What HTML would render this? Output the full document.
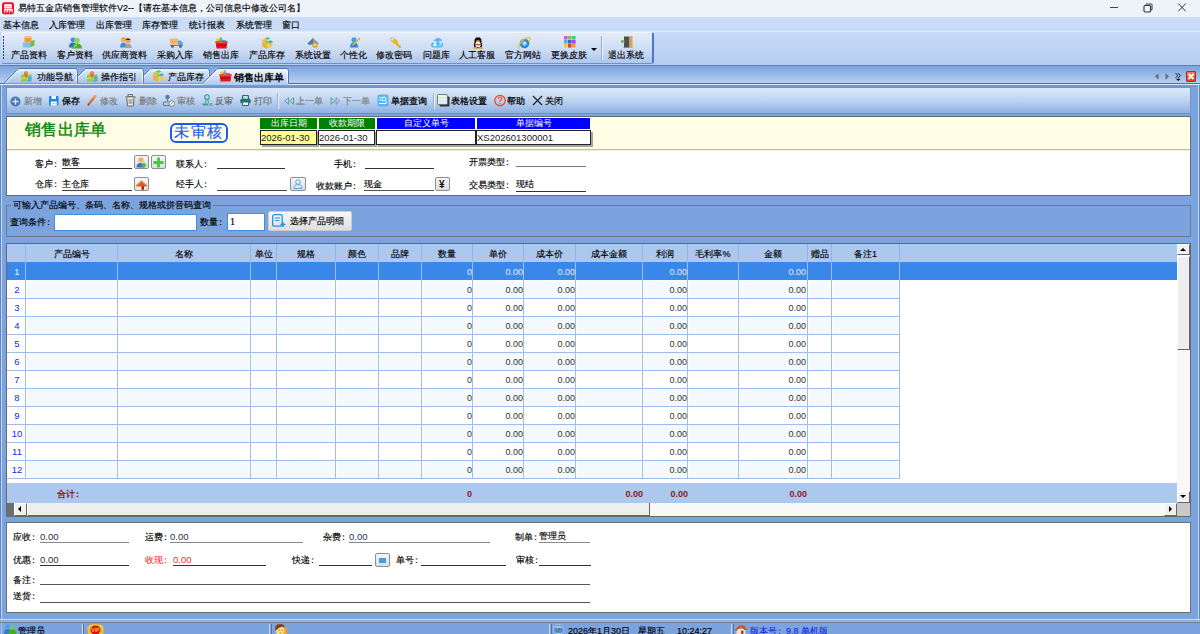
<!DOCTYPE html><html><head><meta charset="utf-8"><style>
*{box-sizing:border-box;margin:0;padding:0}
html,body{width:1200px;height:634px;overflow:hidden;background:#7ba3de;font-family:"Liberation Sans",sans-serif;font-size:9px;color:#000;position:relative}
.a{position:absolute;white-space:nowrap;line-height:1}
.t{font-size:9px;line-height:11px;-webkit-text-stroke:0.15px currentColor}
.g{color:#8c8c8c}
.ul{position:absolute;height:1px;background:#333}
.btn{position:absolute;border:1px solid #8e8e8e;border-radius:2px;background:linear-gradient(#f6f6f6,#dedede)}
</style></head><body>
<div class="a" style="left:0px;top:0px;width:1200px;height:17px;background:#eef2f9"></div>
<svg class="a" style="left:1px;top:1px" width="14" height="14"><rect x="1" y="1.2" width="12" height="12" rx="2" fill="#f0102a"/><rect x="3.2" y="3.2" width="7.6" height="4.3" fill="#fff"/><path d="M4 5.3h6" stroke="#f6a0a8" stroke-width="0.9"/><path d="M3 8.6h8.2v2.8" fill="none" stroke="#fff" stroke-width="1.2"/><path d="M4.5 8.8l-1.3 2.8M7 8.8l-1.3 2.8M9.5 8.8l-1.3 2.8" stroke="#fff" stroke-width="1.1"/></svg>
<div class="a t" style="left:18px;top:3px;">易特五金店销售管理软件V2--【请在基本信息，公司信息中修改公司名】</div>
<div class="a" style="left:1110px;top:7px;width:8px;height:1px;background:#444"></div>
<svg class="a" style="left:1143px;top:3px" width="10" height="10"><rect x="1" y="2.5" width="6.5" height="6.5" rx="1" fill="none" stroke="#333" stroke-width="1.1"/><path d="M3 2.5V1.5Q3 1 3.5 1H8.5Q9 1 9 1.5V6.5Q9 7 8.5 7H7.5" fill="none" stroke="#333" stroke-width="1"/></svg>
<svg class="a" style="left:1177px;top:2px" width="10" height="11"><path d="M1.2 1.5L8.8 9.3M8.8 1.5L1.2 9.3" stroke="#333" stroke-width="1"/></svg>
<div class="a" style="left:0px;top:17px;width:1200px;height:15px;background:#c9dbf5"></div>
<div class="a t" style="left:3px;top:20px;">基本信息</div>
<div class="a t" style="left:49px;top:20px;">入库管理</div>
<div class="a t" style="left:96px;top:20px;">出库管理</div>
<div class="a t" style="left:142px;top:20px;">库存管理</div>
<div class="a t" style="left:189px;top:20px;">统计报表</div>
<div class="a t" style="left:236px;top:20px;">系统管理</div>
<div class="a t" style="left:282px;top:20px;">窗口</div>
<div class="a" style="left:0px;top:31px;width:1200px;height:1px;background:#dfe7f5"></div>
<div class="a" style="left:0px;top:32px;width:1200px;height:33px;background:linear-gradient(#c6daf5,#b5cdf1)"></div>
<div class="a" style="left:1px;top:32px;width:653px;height:32px;border-radius:3px;background:linear-gradient(#e3ecf9,#cddcf4 55%,#aec7ec);border-bottom:1px solid #6d8fc7;border-right:2px solid #4a78c8;border-top:1px solid #eef3fb"></div>
<div class="a" style="left:3px;top:36px;width:1px;height:2px;background:#26467a"></div>
<div class="a" style="left:3px;top:39px;width:1px;height:2px;background:#26467a"></div>
<div class="a" style="left:3px;top:42px;width:1px;height:2px;background:#26467a"></div>
<div class="a" style="left:3px;top:45px;width:1px;height:2px;background:#26467a"></div>
<div class="a" style="left:3px;top:48px;width:1px;height:2px;background:#26467a"></div>
<div class="a" style="left:3px;top:51px;width:1px;height:2px;background:#26467a"></div>
<div class="a" style="left:3px;top:54px;width:1px;height:2px;background:#26467a"></div>
<div class="a" style="left:3px;top:57px;width:1px;height:2px;background:#26467a"></div>
<div class="a t" style="left:11px;top:50px;">产品资料</div>
<div class="a t" style="left:57px;top:50px;">客户资料</div>
<div class="a t" style="left:102px;top:50px;">供应商资料</div>
<div class="a t" style="left:157px;top:50px;">采购入库</div>
<div class="a t" style="left:203px;top:50px;">销售出库</div>
<div class="a t" style="left:249px;top:50px;">产品库存</div>
<div class="a t" style="left:295px;top:50px;">系统设置</div>
<div class="a t" style="left:340px;top:50px;">个性化</div>
<div class="a t" style="left:376px;top:50px;">修改密码</div>
<div class="a t" style="left:423px;top:50px;">问题库</div>
<div class="a t" style="left:459px;top:50px;">人工客服</div>
<div class="a t" style="left:505px;top:50px;">官方网站</div>
<div class="a t" style="left:551px;top:50px;">更换皮肤</div>
<div class="a t" style="left:608px;top:50px;">退出系统</div>
<div class="a" style="left:591px;top:48px;width:0;height:0;border-left:3px solid transparent;border-right:3px solid transparent;border-top:3px solid #000"></div>
<div class="a" style="left:601px;top:36px;width:1px;height:24px;background:#8ea9d4;box-shadow:1px 0 #f2f6fc"></div>
<svg class="a" style="left:22px;top:36px" width="13" height="12"><path d="M1 6.5h8v5H1z" fill="#7cc0f0"/><path d="M1 6.5h8" stroke="#a8d8f8"/><path d="M8.5 5l4-1v5.5l-4 1.5z" fill="#6cc040"/><rect x="2.5" y="0.5" width="7" height="6" rx="1" fill="#f59a28"/><path d="M3 1.5h6" stroke="#fcc070" stroke-width="1"/></svg>
<svg class="a" style="left:69px;top:37px" width="13" height="12"><circle cx="4" cy="2.8" r="2.4" fill="#3c8ee0"/><path d="M0 10Q0 5.5 4 5.5Q6 5.5 6.5 7V10.5H0z" fill="#2a6ec8"/><circle cx="8" cy="3.5" r="2.8" fill="#8ad850"/><path d="M3 11.5Q3 6.5 8 6.5Q13 6.5 13 11.5z" fill="#50b020"/><path d="M5 10.5Q5 8 8 8" stroke="#a8ec70" fill="none"/></svg>
<svg class="a" style="left:120px;top:37px" width="12" height="11"><circle cx="3.5" cy="3" r="2.6" fill="#f4b060"/><path d="M1 2Q3.5-0.8 6 2z" fill="#d8a020"/><path d="M0 10.5Q0 5.8 3.5 5.8Q6 5.8 6.5 8V10.5z" fill="#3a90e0"/><circle cx="8" cy="3.5" r="2.6" fill="#f4a060"/><path d="M5.3 3Q8-0.5 10.7 3z" fill="#333"/><path d="M4.5 11Q4.5 6.5 8 6.5Q11.5 6.5 11.5 11z" fill="#9aa0a8"/><path d="M8 7v3" stroke="#e8c040" stroke-width="0.8"/></svg>
<svg class="a" style="left:170px;top:38px" width="13" height="10"><rect x="0" y="0.5" width="8" height="6.5" fill="#f4b878"/><path d="M0 3.5h8" stroke="#e09850" stroke-width="0.6"/><path d="M8 2.5h3l2 2.5v2h-5z" fill="#5aa8e8"/><rect x="0" y="7" width="13" height="1" fill="#808890"/><circle cx="2.5" cy="8.5" r="1.4" fill="#5a6068"/><circle cx="10.5" cy="8.5" r="1.4" fill="#5a6068"/></svg>
<svg class="a" style="left:215px;top:37px" width="13" height="12"><ellipse cx="3.5" cy="3" rx="2.5" ry="1.8" fill="#f8c820"/><path d="M6 2.5l4 0.5 2 1.2v1H6z" fill="#30a8e8"/><path d="M4 2.5h3v2H4z" fill="#60c040"/><path d="M0.5 4.2h12l-1 7.3h-10z" fill="#e01818"/><rect x="0.3" y="4.2" width="12.4" height="2" rx="1" fill="#f04848"/><path d="M1.8 8h9.4" stroke="#b80808" stroke-width="1.2"/><rect x="5.3" y="0" width="1.3" height="5" fill="#909090"/></svg>
<svg class="a" style="left:261px;top:37px" width="12" height="12"><path d="M1 4.5l5 2.5v5l-5-2.5z" fill="#f0b040"/><path d="M6 7l5.5-2.5v5l-5.5 2.5z" fill="#f8c858"/><path d="M3.5 1.5l3-1.5 3 1.5-3 1.5z" fill="#70c840"/><path d="M0.5 3.5l3-1.7 3 1.7-3 1.7z" fill="#f4b830"/><path d="M6.5 5l3-1.7 2.5 1.4-3 1.7z" fill="#30a0e8"/><path d="M3.5 5.2l3-1.7 3 1.7-3 1.7z" fill="#80d050"/></svg>
<svg class="a" style="left:307px;top:37px" width="13" height="11"><path d="M6 0.5l3 3.5-3 3.5-3-3.5z" fill="#f8d040"/><path d="M0.5 6.5L6 1l1 6-5 1z" fill="#3a70b8" opacity="0.9"/><path d="M6 1l6 5.5-4 1z" fill="#6a9ad0"/><circle cx="8" cy="8" r="2.8" fill="#e0a020"/><circle cx="8" cy="8" r="1.2" fill="#f8e8a0"/></svg>
<svg class="a" style="left:350px;top:37px" width="10" height="11"><circle cx="4" cy="2.8" r="2.6" fill="#40a0f0"/><path d="M0 10.5Q0 5.5 4 5.5Q8 5.5 8 10.5z" fill="#2a86e0"/><path d="M2.5 8.5L9 2" stroke="#f0b020" stroke-width="1.6"/><path d="M9 2l0.8-0.8" stroke="#e07050" stroke-width="1.6"/></svg>
<svg class="a" style="left:390px;top:37px" width="12" height="12"><circle cx="2.5" cy="2.5" r="2" fill="none" stroke="#b0b0b0" stroke-width="0.9"/><circle cx="5" cy="4.5" r="2.6" fill="#f0b828"/><path d="M6 6l4.5 5" stroke="#e8a820" stroke-width="2"/><path d="M8.5 8.5l2-1M9.5 10l1.5-1" stroke="#c0c0c0" stroke-width="0.9"/></svg>
<svg class="a" style="left:431px;top:37px" width="12" height="11"><path d="M2.5 10.5Q0 10.5 0 8Q0 5.5 2.5 5.5Q3 1 7 1Q11 1 11.2 5Q12 6 12 8Q12 10.5 9.5 10.5z" fill="#58b8f0"/><circle cx="4" cy="5.5" r="1.3" fill="#fff"/><path d="M2 9Q2 7 4 7Q6 7 6 9z" fill="#fff"/><text x="7" y="9" font-size="7" fill="#fff" font-family="Liberation Sans" font-weight="bold">?</text></svg>
<svg class="a" style="left:472px;top:37px" width="12" height="12"><ellipse cx="6" cy="4.5" rx="3.6" ry="4.3" fill="#111"/><ellipse cx="6" cy="8" rx="4.2" ry="3.2" fill="#111"/><ellipse cx="6" cy="7.5" rx="2.8" ry="2.8" fill="#fff"/><ellipse cx="6" cy="4.3" rx="2" ry="1" fill="#f0b020"/><path d="M2.5 6.3Q6 8 9.5 6.3L9 7.8Q6 9 3 7.8z" fill="#e02020"/><ellipse cx="3.3" cy="11" rx="2.3" ry="1" fill="#f0a020"/><ellipse cx="8.7" cy="11" rx="2.3" ry="1" fill="#f0a020"/></svg>
<svg class="a" style="left:518px;top:37px" width="13" height="12"><circle cx="6.5" cy="6.5" r="4.8" fill="#2a8ae0"/><circle cx="6.5" cy="6.5" r="2.2" fill="#a8d8f8"/><rect x="4" y="6" width="6" height="1.3" fill="#2a8ae0"/><path d="M4.3 6.5h4.5" stroke="#fff" stroke-width="0.8"/><path d="M1 11.5Q-0.5 9 4 4Q9.5-1 12 0.8Q12.8 2 11 4" stroke="#f0c020" stroke-width="1.2" fill="none"/></svg>
<svg class="a" style="left:564px;top:36px" width="12" height="12"><rect x="0" y="0" width="3.6" height="3.6" fill="#e050d0"/><rect x="4" y="0" width="3.6" height="3.6" fill="#70d030"/><rect x="8" y="0" width="3.6" height="3.6" fill="#40d080"/><rect x="0" y="4" width="3.6" height="3.6" fill="#40b8f0"/><rect x="4" y="4" width="3.6" height="3.6" fill="#4060e0"/><rect x="8" y="4" width="3.6" height="3.6" fill="#b040f0"/><rect x="0" y="8" width="3.6" height="3.6" fill="#f0d030"/><rect x="4" y="8" width="3.6" height="3.6" fill="#e84040"/><rect x="8" y="8" width="3.6" height="3.6" fill="#f0a030"/></svg>
<svg class="a" style="left:621px;top:36px" width="12" height="12"><rect x="3" y="0.5" width="5.5" height="11" fill="#505050"/><path d="M8.5 0.5l3-0.5v12l-3-0.5z" fill="#e0a050"/><rect x="2.5" y="11" width="6" height="1" fill="#888"/><path d="M0 5.5h3.5" stroke="#60c030" stroke-width="2"/><path d="M0 5.5l2-2v4z" fill="#60c030"/></svg>
<div class="a" style="left:0px;top:65px;width:1200px;height:1px;background:#5a80bf"></div>
<div class="a" style="left:0px;top:66px;width:1200px;height:17px;background:linear-gradient(#7aa2dd,#b7d0f2)"></div>
<div class="a" style="left:0px;top:83px;width:1200px;height:1px;background:#476fb2"></div>
<div class="a" style="left:0px;top:84px;width:1200px;height:1px;background:#e2ecfa"></div>
<div class="a" style="left:0px;top:85px;width:1200px;height:2px;background:#7098d4"></div>
<svg class="a" style="left:135px;top:68px" width="75" height="17"><defs><linearGradient id="tga" x1="0" y1="0" x2="0" y2="1"><stop offset="0" stop-color="#f2f7fd"/><stop offset="1" stop-color="#b3cdf0"/></linearGradient><linearGradient id="tgi" x1="0" y1="0" x2="0" y2="1"><stop offset="0" stop-color="#e2ecfa"/><stop offset="1" stop-color="#a6c3eb"/></linearGradient></defs><path d="M0.5 15.5L14.5 1.5Q15.5 0.5 17 0.5H72Q74.5 0.5 74.5 3V15.5" fill="url(#tgi)" stroke="#4e74b4" stroke-width="1"/><path d="M2.5 15L15.5 2H72Q73.5 2 73.5 4V15" fill="none" stroke="#ffffff" stroke-opacity="0.8" stroke-width="1"/></svg>
<svg class="a" style="left:70px;top:68px" width="74" height="17"><defs><linearGradient id="tga" x1="0" y1="0" x2="0" y2="1"><stop offset="0" stop-color="#f2f7fd"/><stop offset="1" stop-color="#b3cdf0"/></linearGradient><linearGradient id="tgi" x1="0" y1="0" x2="0" y2="1"><stop offset="0" stop-color="#e2ecfa"/><stop offset="1" stop-color="#a6c3eb"/></linearGradient></defs><path d="M0.5 15.5L14.5 1.5Q15.5 0.5 17 0.5H71Q73.5 0.5 73.5 3V15.5" fill="url(#tgi)" stroke="#4e74b4" stroke-width="1"/><path d="M2.5 15L15.5 2H71Q72.5 2 72.5 4V15" fill="none" stroke="#ffffff" stroke-opacity="0.8" stroke-width="1"/></svg>
<svg class="a" style="left:3px;top:68px" width="75" height="17"><defs><linearGradient id="tga" x1="0" y1="0" x2="0" y2="1"><stop offset="0" stop-color="#f2f7fd"/><stop offset="1" stop-color="#b3cdf0"/></linearGradient><linearGradient id="tgi" x1="0" y1="0" x2="0" y2="1"><stop offset="0" stop-color="#e2ecfa"/><stop offset="1" stop-color="#a6c3eb"/></linearGradient></defs><path d="M0.5 15.5L14.5 1.5Q15.5 0.5 17 0.5H72Q74.5 0.5 74.5 3V15.5" fill="url(#tgi)" stroke="#4e74b4" stroke-width="1"/><path d="M2.5 15L15.5 2H72Q73.5 2 73.5 4V15" fill="none" stroke="#ffffff" stroke-opacity="0.8" stroke-width="1"/></svg>
<svg class="a" style="left:202px;top:68px" width="87" height="17"><defs><linearGradient id="tga" x1="0" y1="0" x2="0" y2="1"><stop offset="0" stop-color="#f2f7fd"/><stop offset="1" stop-color="#b3cdf0"/></linearGradient><linearGradient id="tgi" x1="0" y1="0" x2="0" y2="1"><stop offset="0" stop-color="#e2ecfa"/><stop offset="1" stop-color="#a6c3eb"/></linearGradient></defs><path d="M0.5 15.5L14.5 1.5Q15.5 0.5 17 0.5H84Q86.5 0.5 86.5 3V15.5" fill="url(#tga)" stroke="#4e74b4" stroke-width="1"/><path d="M2.5 15L15.5 2H84Q85.5 2 85.5 4V15" fill="none" stroke="#ffffff" stroke-opacity="0.8" stroke-width="1"/></svg>
<div class="a" style="left:203px;top:83px;width:85px;height:2px;background:#b3cdf0"></div>
<svg class="a" style="left:21px;top:71px" width="11" height="11"><path d="M0 4l3.5-1 3.5 1 3.5-1v7.5l-3.5 1-3.5-1-3.5 1z" fill="#8ad048"/><path d="M0 7l3.5-0.8 3.5 0.8v1.5l-3.5-0.8-3.5 0.8z" fill="#e8d048"/><path d="M7 6l3.5-0.8v2.5L7 8.5z" fill="#40a8e8"/><path d="M7 9l3.5-0.8v1.5L7 10.5z" fill="#40a8e8"/><circle cx="5" cy="2.3" r="2" fill="#f06020"/><path d="M3.3 3.2L5 7.5 6.7 3.2z" fill="#f06020"/><circle cx="5" cy="2.3" r="0.7" fill="#fff"/></svg>
<svg class="a" style="left:87px;top:71px" width="11" height="11"><path d="M0 4l3.5-1 3.5 1 3.5-1v7.5l-3.5 1-3.5-1-3.5 1z" fill="#8ad048"/><path d="M0 7l3.5-0.8 3.5 0.8v1.5l-3.5-0.8-3.5 0.8z" fill="#e8d048"/><path d="M7 6l3.5-0.8v2.5L7 8.5z" fill="#40a8e8"/><path d="M7 9l3.5-0.8v1.5L7 10.5z" fill="#40a8e8"/><circle cx="5" cy="2.3" r="2" fill="#f06020"/><path d="M3.3 3.2L5 7.5 6.7 3.2z" fill="#f06020"/><circle cx="5" cy="2.3" r="0.7" fill="#fff"/></svg>
<svg class="a" style="left:152px;top:70px" width="12" height="12"><path d="M1 4.5l5 2.5v5l-5-2.5z" fill="#f0b040"/><path d="M6 7l5.5-2.5v5l-5.5 2.5z" fill="#f8c858"/><path d="M3.5 1.5l3-1.5 3 1.5-3 1.5z" fill="#70c840"/><path d="M0.5 3.5l3-1.7 3 1.7-3 1.7z" fill="#f4b830"/><path d="M6.5 5l3-1.7 2.5 1.4-3 1.7z" fill="#30a0e8"/><path d="M3.5 5.2l3-1.7 3 1.7-3 1.7z" fill="#80d050"/></svg>
<svg class="a" style="left:219px;top:70px" width="13" height="12"><ellipse cx="3.5" cy="3" rx="2.5" ry="1.8" fill="#f8c820"/><path d="M6 2.5l4 0.5 2 1.2v1H6z" fill="#30a8e8"/><path d="M4 2.5h3v2H4z" fill="#60c040"/><path d="M0.5 4.2h12l-1 7.3h-10z" fill="#e01818"/><rect x="0.3" y="4.2" width="12.4" height="2" rx="1" fill="#f04848"/><path d="M1.8 8h9.4" stroke="#b80808" stroke-width="1.2"/><rect x="5.3" y="0" width="1.3" height="5" fill="#909090"/></svg>
<div class="a t" style="left:37px;top:72px;">功能导航</div>
<div class="a t" style="left:101px;top:72px;">操作指引</div>
<div class="a t" style="left:168px;top:72px;">产品库存</div>
<div class="a t" style="left:234px;top:72px;font-weight:bold;font-size:9.5px;-webkit-text-stroke:0">销售出库单</div>
<svg class="a" style="left:1154px;top:72px" width="30" height="12"><path d="M4.5 1.2v6.6L1 4.5z" fill="#6a6e74"/><path d="M11.5 1.2v6.6L15 4.5z" fill="#6a6e74"/><path d="M21.5 1.2l2.5 2.3-2.5 2.3M24 1.2l2.5 2.3-2.5 2.3" stroke="#222" fill="none" stroke-width="1"/><path d="M22 6.8h4.5l-2.25 2.2z" fill="#000"/></svg>
<div class="a" style="left:1186px;top:71px;width:10px;height:11px;background:linear-gradient(#f07a5a,#d8402a);border:1px solid #b0301a;border-radius:1px"></div>
<svg class="a" style="left:1186px;top:71px" width="10" height="11"><path d="M2.5 3l5 5M7.5 3l-5 5" stroke="#fff" stroke-width="1.8"/></svg>
<div class="a" style="left:0px;top:85px;width:1px;height:535px;background:#5d85c0"></div>
<div class="a" style="left:1px;top:85px;width:1px;height:535px;background:#c4d6f0"></div>
<div class="a" style="left:1198px;top:85px;width:1px;height:535px;background:#c4d6f0"></div>
<div class="a" style="left:1199px;top:85px;width:1px;height:535px;background:#5d85c0"></div>
<div class="a" style="left:6px;top:87px;width:1185px;height:27px;background:linear-gradient(#dde9f9,#c2d6f2 45%,#8fb1e3);border:1px solid #6f93cb;border-bottom:1px solid #6a8fc8"></div>
<svg class="a" style="left:10px;top:96px" width="11" height="11"><circle cx="5.5" cy="5.5" r="5" fill="#4a78b0"/><path d="M5.5 2.5v6M2.5 5.5h6" stroke="#dfe8f4" stroke-width="1.3"/></svg>
<div class="a t" style="left:24px;top:96px;color:#7a7a7a">新增</div>
<svg class="a" style="left:49px;top:96px" width="10" height="10"><rect x="0" y="0" width="9.5" height="9.5" rx="1" fill="#1a86f0"/><rect x="2.5" y="0" width="4.5" height="3" fill="#fff"/><rect x="1.8" y="5.5" width="6" height="4" fill="#fff"/><path d="M3 7.5h3.5" stroke="#a0c8f0" stroke-width="0.8"/></svg>
<div class="a t" style="left:62px;top:96px;color:#000;-webkit-text-stroke:0.3px #000">保存</div>
<svg class="a" style="left:87px;top:95px" width="10" height="11"><path d="M1.5 9.5L7.5 2" stroke="#e07038" stroke-width="2.4" stroke-linecap="round"/><path d="M7 2.5L8.5 1" stroke="#f0a070" stroke-width="2.4" stroke-linecap="round"/><path d="M1 10.5l1.2-2" stroke="#804020" stroke-width="1"/></svg>
<div class="a t" style="left:100px;top:96px;color:#7a7a7a">修改</div>
<svg class="a" style="left:125px;top:94px" width="11" height="13"><rect x="3" y="0.5" width="4.5" height="2" fill="none" stroke="#6a6a58" stroke-width="0.9"/><path d="M0.5 3h10" stroke="#6a6a58" stroke-width="1.3"/><path d="M1.8 3.5l0.7 8.5h5.8l0.7-8.5" fill="#e8ecf0" stroke="#6a6a58" stroke-width="1"/><path d="M4 5v5M5.5 5v5M7 5v5" stroke="#8a8a70" stroke-width="0.8"/></svg>
<div class="a t" style="left:139px;top:96px;color:#777">删除</div>
<svg class="a" style="left:163px;top:94px" width="13" height="13"><circle cx="4.5" cy="3" r="2.2" fill="#5a78a8"/><path d="M4.5 5v2.5M0.5 8h8v3.5h-8z" fill="none" stroke="#7a7a7a" stroke-width="1"/><circle cx="8.8" cy="9.5" r="2.8" fill="#f4f6f8" stroke="#7a7a7a" stroke-width="0.9"/><path d="M7.8 10.3l2-2" stroke="#40a040" stroke-width="0.9"/></svg>
<div class="a t" style="left:177px;top:96px;color:#777">审核</div>
<svg class="a" style="left:202px;top:94px" width="11" height="13"><circle cx="5" cy="3" r="2.3" fill="none" stroke="#30a090" stroke-width="1.1"/><path d="M4.2 5.2L3.5 9M5.8 5.2L6.5 9" stroke="#30a090" stroke-width="1"/><path d="M0.5 9.5h6v2h-6z" fill="#40a080"/><path d="M7.5 9l3 3M10.5 9l-3 3" stroke="#30a090" stroke-width="0.9"/></svg>
<div class="a t" style="left:215px;top:96px;color:#666">反审</div>
<svg class="a" style="left:240px;top:95px" width="11" height="11"><path d="M2.5 4V1.5Q2.5 0.5 3.5 0.5h4Q8.5 0.5 8.5 1.5V4" fill="none" stroke="#2a6a60" stroke-width="1.1"/><rect x="0.3" y="3.8" width="10.4" height="4.4" rx="1.5" fill="#2a7068"/><path d="M2.5 7.5v3h6v-3" fill="#f0f4f4" stroke="#2a6a60" stroke-width="1"/></svg>
<div class="a t" style="left:254px;top:96px;color:#6a6a6a">打印</div>
<div class="a" style="left:277px;top:93px;width:1px;height:16px;background:#9bb2d6;box-shadow:1px 0 #eef4fc"></div>
<svg class="a" style="left:284px;top:97px" width="11" height="8"><path d="M4.5 0.7L0.8 4l3.7 3.3z" fill="none" stroke="#6a90b0" stroke-width="0.9"/><path d="M9.5 0.7L5.8 4l3.7 3.3z" fill="none" stroke="#40a880" stroke-width="0.9"/></svg>
<div class="a t" style="left:296px;top:96px;color:#7a7a7a">上一单</div>
<svg class="a" style="left:330px;top:97px" width="11" height="8"><path d="M1 0.7L4.7 4 1 7.3z" fill="none" stroke="#40a880" stroke-width="0.9"/><path d="M6 0.7L9.7 4 6 7.3z" fill="none" stroke="#6a90b0" stroke-width="0.9"/></svg>
<div class="a t" style="left:343px;top:96px;color:#7a7a7a">下一单</div>
<svg class="a" style="left:377px;top:94px" width="12" height="13"><rect x="0.5" y="0.5" width="11" height="12" rx="2" fill="#58b4f0"/><circle cx="7" cy="5" r="2" fill="none" stroke="#fff" stroke-width="1"/><path d="M8.5 6.5l1.5 2M2 3.5h2.5M2 6h2.5M2 9.5h8" stroke="#fff" stroke-width="0.9"/></svg>
<div class="a t" style="left:391px;top:96px;-webkit-text-stroke:0.3px #000">单据查询</div>
<div class="a" style="left:433px;top:93px;width:1px;height:16px;background:#9bb2d6;box-shadow:1px 0 #eef4fc"></div>
<svg class="a" style="left:437px;top:94px" width="13" height="13"><rect x="2.5" y="2.5" width="10" height="10" rx="1" fill="#333"/><rect x="0.5" y="0.5" width="10" height="10" rx="1" fill="#f8f0c8" stroke="#5a6a7a" stroke-width="0.8"/><rect x="2" y="3" width="8" height="7" fill="#c8e0f8"/><path d="M2 5.5h8M2 8h8M4.7 3v7M7.3 3v7" stroke="#fff" stroke-width="0.7"/></svg>
<div class="a t" style="left:451px;top:96px;-webkit-text-stroke:0.25px #000">表格设置</div>
<svg class="a" style="left:494px;top:94px" width="12" height="13"><circle cx="6" cy="6.5" r="5.2" fill="none" stroke="#f04a20" stroke-width="1.3"/><path d="M4.2 5Q4.2 3 6 3Q7.8 3 7.8 4.7Q7.8 5.8 6 6.8V8" fill="none" stroke="#f04a20" stroke-width="1.1"/><circle cx="6" cy="9.8" r="0.7" fill="#f04a20"/></svg>
<div class="a t" style="left:507px;top:96px;-webkit-text-stroke:0.25px #000">帮助</div>
<svg class="a" style="left:532px;top:95px" width="11" height="11"><path d="M1 1L10 10M10 1L1 10" stroke="#222" stroke-width="1.2"/></svg>
<div class="a t" style="left:545px;top:96px;">关闭</div>
<div class="a" style="left:6px;top:116px;width:1185px;height:80px;background:#fff;border:1px solid #6a6a6a"></div>
<div class="a" style="left:7px;top:117px;width:1183px;height:33px;background:#fffde3"></div>
<div class="a" style="left:7px;top:117px;width:1183px;height:1px;background:#fff"></div>
<div class="a" style="left:7px;top:149px;width:1183px;height:1px;background:#c4c0a4"></div>
<div class="a" style="left:7px;top:150px;width:1183px;height:1px;background:#ecebe0"></div>
<div class="a t" style="left:25px;top:121px;font-family:'Liberation Serif',serif;font-size:16px;line-height:18px;color:#0e870e;-webkit-text-stroke:0.45px #0e870e;letter-spacing:0.3px">销售出库单</div>
<div class="a" style="left:170px;top:123px;width:58px;height:20px;border:2px solid #1a5af0;border-radius:6px"></div>
<div class="a t" style="left:174px;top:124px;font-family:'Liberation Serif',serif;font-size:15px;line-height:17px;color:#1a5af0;letter-spacing:1.5px">未审核</div>
<div class="a t" style="left:260px;top:118px;width:57px;height:11px;background:#008000;color:#fff;text-align:center;line-height:11px;-webkit-text-stroke:0">出库日期</div>
<div class="a t" style="left:319px;top:118px;width:56px;height:11px;background:#008000;color:#fff;text-align:center;line-height:11px;-webkit-text-stroke:0">收款期限</div>
<div class="a t" style="left:377px;top:118px;width:98px;height:11px;background:#0000ff;color:#fff;text-align:center;line-height:11px;-webkit-text-stroke:0">自定义单号</div>
<div class="a t" style="left:477px;top:118px;width:113px;height:11px;background:#0000ff;color:#fff;text-align:center;line-height:11px;-webkit-text-stroke:0">单据编号</div>
<div class="a t" style="left:260px;top:130px;width:57px;height:15px;background:#ffff90;border:1px solid #222;box-shadow:2px 2px 0 #a4a4a4;line-height:13px;padding-left:0px;font-size:9.5px;color:#222;-webkit-text-stroke:0">2026-01-30</div>
<div class="a t" style="left:318px;top:130px;width:57px;height:15px;background:#fff;border:1px solid #222;box-shadow:2px 2px 0 #a4a4a4;line-height:13px;padding-left:0px;font-size:9.5px;color:#222;-webkit-text-stroke:0">2026-01-30</div>
<div class="a t" style="left:376px;top:130px;width:100px;height:15px;background:#fff;border:1px solid #222;box-shadow:2px 2px 0 #a4a4a4;line-height:13px;padding-left:0px;font-size:9.5px;color:#222;-webkit-text-stroke:0"></div>
<div class="a t" style="left:476px;top:130px;width:115px;height:15px;background:#fff;border:1px solid #222;box-shadow:2px 2px 0 #a4a4a4;line-height:13px;padding-left:0px;font-size:9.5px;color:#222;-webkit-text-stroke:0">XS202601300001</div>
<div class="a t" style="left:35px;top:159px;">客户<span style="display:inline-block;width:9px;text-indent:-2px">：</span></div>
<div class="a t" style="left:62px;top:157px;">散客</div>
<div class="ul" style="left:62px;top:168px;width:70px"></div>
<div class="a t" style="left:35px;top:179px;">仓库<span style="display:inline-block;width:9px;text-indent:-2px">：</span></div>
<div class="a t" style="left:62px;top:179px;">主仓库</div>
<div class="ul" style="left:62px;top:190px;width:70px;background:#444"></div>
<div class="btn" style="left:134px;top:155px;width:15px;height:14px"></div>
<svg class="a" style="left:136px;top:157px" width="11" height="11"><circle cx="5" cy="3" r="2.7" fill="#f8b070"/><path d="M0.5 10.5Q0.5 6 4.5 6Q7 6 7.5 8V10.5z" fill="#3070d0"/><path d="M5.5 8.3h5M8 5.8v5" stroke="#40c040" stroke-width="1.8"/></svg>
<div class="btn" style="left:151px;top:155px;width:15px;height:14px"></div>
<svg class="a" style="left:153px;top:157px" width="11" height="11"><path d="M5.5 0.5v10M0.5 5.5h10" stroke="#48c840" stroke-width="2.8"/></svg>
<div class="btn" style="left:134px;top:177px;width:15px;height:14px"></div>
<svg class="a" style="left:136px;top:180px" width="11" height="10"><rect x="1.5" y="4.5" width="8" height="5.5" fill="#f4ead8"/><path d="M0 5.5L5.5 0.5 11 5.5 10 6.5H1z" fill="#e05818"/><path d="M1.5 5L5.5 1.5 9.5 5" stroke="#f09050" stroke-width="0.8" fill="none"/><rect x="5.5" y="6" width="2.5" height="4" rx="1" fill="#903010"/></svg>
<div class="a t" style="left:176px;top:159px;">联系人<span style="display:inline-block;width:9px;text-indent:-2px">：</span></div>
<div class="ul" style="left:217px;top:168px;width:68px"></div>
<div class="a t" style="left:176px;top:179px;">经手人<span style="display:inline-block;width:9px;text-indent:-2px">：</span></div>
<div class="ul" style="left:217px;top:190px;width:70px;background:#444"></div>
<div class="btn" style="left:290px;top:177px;width:16px;height:14px"></div>
<svg class="a" style="left:293px;top:179px" width="10" height="10"><circle cx="5" cy="3" r="2.3" fill="none" stroke="#5aa8e8"/><path d="M1 9.5c0-3 1.5-4 4-4s4 1 4 4z" fill="none" stroke="#5aa8e8"/></svg>
<div class="a t" style="left:334px;top:159px;">手机<span style="display:inline-block;width:9px;text-indent:-2px">：</span></div>
<div class="ul" style="left:365px;top:168px;width:69px"></div>
<div class="a t" style="left:316px;top:181px;">收款账户<span style="display:inline-block;width:9px;text-indent:-2px">：</span></div>
<div class="a t" style="left:364px;top:179px;">现金</div>
<div class="ul" style="left:364px;top:190px;width:70px;background:#555"></div>
<div class="btn" style="left:435px;top:177px;width:15px;height:14px"></div>
<div class="a t" style="left:439px;top:179px;font-weight:bold;font-size:10px;color:#111;-webkit-text-stroke:0">¥</div>
<div class="a t" style="left:469px;top:157px;">开票类型<span style="display:inline-block;width:9px;text-indent:-2px">：</span></div>
<div class="ul" style="left:516px;top:166px;width:70px;background:#777"></div>
<div class="a t" style="left:469px;top:180px;">交易类型<span style="display:inline-block;width:9px;text-indent:-2px">：</span></div>
<div class="a t" style="left:516px;top:179px;">现结</div>
<div class="ul" style="left:516px;top:191px;width:70px"></div>
<div class="a" style="left:6px;top:205px;width:1185px;height:1px;background:#6a7890"></div>
<div class="a" style="left:6px;top:205px;width:1px;height:32px;background:#6a7890"></div>
<div class="a" style="left:6px;top:236px;width:1185px;height:1px;background:#6a7890"></div>
<div class="a" style="left:1190px;top:205px;width:1px;height:32px;background:#6a7890"></div>
<div class="a t" style="left:11px;top:200px;background:#7ba3de;padding:0 2px">可输入产品编号、条码、名称、规格或拼音码查询</div>
<div class="a t" style="left:10px;top:217px;">查询条件<span style="display:inline-block;width:9px;text-indent:-2px">：</span></div>
<div class="a" style="left:54px;top:214px;width:143px;height:17px;background:#fff;border:1px solid #3d8fe0"></div>
<div class="a t" style="left:200px;top:217px;">数量<span style="display:inline-block;width:9px;text-indent:-2px">：</span></div>
<div class="a" style="left:227px;top:213px;width:38px;height:18px;background:#fff;border:1px solid #3d8fe0"></div>
<div class="a t" style="left:230px;top:216px;font-family:'Liberation Serif',serif;font-size:10px">1</div>
<div class="a" style="left:268px;top:211px;width:84px;height:20px;background:linear-gradient(#f8f8f8,#dedede);border-radius:2px;border:1px solid #c8ccd4"></div>
<svg class="a" style="left:272px;top:214px" width="14" height="14"><rect x="0.7" y="0.7" width="9.5" height="11.5" rx="1.5" fill="none" stroke="#2a90e0" stroke-width="1.3"/><path d="M3 4h5M3 6.5h4" stroke="#2a90e0" stroke-width="1.2"/><path d="M8.5 10.5h5M11 8v5" stroke="#2a90e0" stroke-width="1.4"/></svg>
<div class="a t" style="left:290px;top:216px;">选择产品明细</div>
<div class="a" style="left:6px;top:243px;width:1185px;height:274px;background:#fff;border:1px solid #696969"></div>
<div class="a" style="left:7px;top:244px;width:1170px;height:18px;background:#adc8ee"></div>
<div class="a" style="left:7px;top:262px;width:1170px;height:18px;background:#3a87ea"></div>
<div class="a" style="left:7px;top:280px;width:1170px;height:1px;background:#fff"></div>
<div class="a" style="left:27px;top:281px;width:-3px;height:17px;background:#f4f9ff"></div>
<div class="a" style="left:27px;top:281px;width:89px;height:17px;background:#f4f9ff"></div>
<div class="a" style="left:119px;top:281px;width:130px;height:17px;background:#f4f9ff"></div>
<div class="a" style="left:252px;top:281px;width:23px;height:17px;background:#f4f9ff"></div>
<div class="a" style="left:278px;top:281px;width:56px;height:17px;background:#f4f9ff"></div>
<div class="a" style="left:337px;top:281px;width:40px;height:17px;background:#f4f9ff"></div>
<div class="a" style="left:380px;top:281px;width:40px;height:17px;background:#f4f9ff"></div>
<div class="a" style="left:423px;top:281px;width:48px;height:17px;background:#f4f9ff"></div>
<div class="a" style="left:474px;top:281px;width:48px;height:17px;background:#f4f9ff"></div>
<div class="a" style="left:525px;top:281px;width:49px;height:17px;background:#f4f9ff"></div>
<div class="a" style="left:577px;top:281px;width:64px;height:17px;background:#f4f9ff"></div>
<div class="a" style="left:644px;top:281px;width:42px;height:17px;background:#f4f9ff"></div>
<div class="a" style="left:689px;top:281px;width:48px;height:17px;background:#f4f9ff"></div>
<div class="a" style="left:740px;top:281px;width:66px;height:17px;background:#f4f9ff"></div>
<div class="a" style="left:809px;top:281px;width:21px;height:17px;background:#f4f9ff"></div>
<div class="a" style="left:833px;top:281px;width:65px;height:17px;background:#f4f9ff"></div>
<div class="a" style="left:7px;top:298px;width:892px;height:1px;background:#9fbde8"></div>
<div class="a" style="left:7px;top:316px;width:892px;height:1px;background:#9fbde8"></div>
<div class="a" style="left:27px;top:317px;width:-3px;height:17px;background:#f4f9ff"></div>
<div class="a" style="left:27px;top:317px;width:89px;height:17px;background:#f4f9ff"></div>
<div class="a" style="left:119px;top:317px;width:130px;height:17px;background:#f4f9ff"></div>
<div class="a" style="left:252px;top:317px;width:23px;height:17px;background:#f4f9ff"></div>
<div class="a" style="left:278px;top:317px;width:56px;height:17px;background:#f4f9ff"></div>
<div class="a" style="left:337px;top:317px;width:40px;height:17px;background:#f4f9ff"></div>
<div class="a" style="left:380px;top:317px;width:40px;height:17px;background:#f4f9ff"></div>
<div class="a" style="left:423px;top:317px;width:48px;height:17px;background:#f4f9ff"></div>
<div class="a" style="left:474px;top:317px;width:48px;height:17px;background:#f4f9ff"></div>
<div class="a" style="left:525px;top:317px;width:49px;height:17px;background:#f4f9ff"></div>
<div class="a" style="left:577px;top:317px;width:64px;height:17px;background:#f4f9ff"></div>
<div class="a" style="left:644px;top:317px;width:42px;height:17px;background:#f4f9ff"></div>
<div class="a" style="left:689px;top:317px;width:48px;height:17px;background:#f4f9ff"></div>
<div class="a" style="left:740px;top:317px;width:66px;height:17px;background:#f4f9ff"></div>
<div class="a" style="left:809px;top:317px;width:21px;height:17px;background:#f4f9ff"></div>
<div class="a" style="left:833px;top:317px;width:65px;height:17px;background:#f4f9ff"></div>
<div class="a" style="left:7px;top:334px;width:892px;height:1px;background:#9fbde8"></div>
<div class="a" style="left:7px;top:352px;width:892px;height:1px;background:#9fbde8"></div>
<div class="a" style="left:27px;top:353px;width:-3px;height:17px;background:#f4f9ff"></div>
<div class="a" style="left:27px;top:353px;width:89px;height:17px;background:#f4f9ff"></div>
<div class="a" style="left:119px;top:353px;width:130px;height:17px;background:#f4f9ff"></div>
<div class="a" style="left:252px;top:353px;width:23px;height:17px;background:#f4f9ff"></div>
<div class="a" style="left:278px;top:353px;width:56px;height:17px;background:#f4f9ff"></div>
<div class="a" style="left:337px;top:353px;width:40px;height:17px;background:#f4f9ff"></div>
<div class="a" style="left:380px;top:353px;width:40px;height:17px;background:#f4f9ff"></div>
<div class="a" style="left:423px;top:353px;width:48px;height:17px;background:#f4f9ff"></div>
<div class="a" style="left:474px;top:353px;width:48px;height:17px;background:#f4f9ff"></div>
<div class="a" style="left:525px;top:353px;width:49px;height:17px;background:#f4f9ff"></div>
<div class="a" style="left:577px;top:353px;width:64px;height:17px;background:#f4f9ff"></div>
<div class="a" style="left:644px;top:353px;width:42px;height:17px;background:#f4f9ff"></div>
<div class="a" style="left:689px;top:353px;width:48px;height:17px;background:#f4f9ff"></div>
<div class="a" style="left:740px;top:353px;width:66px;height:17px;background:#f4f9ff"></div>
<div class="a" style="left:809px;top:353px;width:21px;height:17px;background:#f4f9ff"></div>
<div class="a" style="left:833px;top:353px;width:65px;height:17px;background:#f4f9ff"></div>
<div class="a" style="left:7px;top:370px;width:892px;height:1px;background:#9fbde8"></div>
<div class="a" style="left:7px;top:388px;width:892px;height:1px;background:#9fbde8"></div>
<div class="a" style="left:27px;top:389px;width:-3px;height:17px;background:#f4f9ff"></div>
<div class="a" style="left:27px;top:389px;width:89px;height:17px;background:#f4f9ff"></div>
<div class="a" style="left:119px;top:389px;width:130px;height:17px;background:#f4f9ff"></div>
<div class="a" style="left:252px;top:389px;width:23px;height:17px;background:#f4f9ff"></div>
<div class="a" style="left:278px;top:389px;width:56px;height:17px;background:#f4f9ff"></div>
<div class="a" style="left:337px;top:389px;width:40px;height:17px;background:#f4f9ff"></div>
<div class="a" style="left:380px;top:389px;width:40px;height:17px;background:#f4f9ff"></div>
<div class="a" style="left:423px;top:389px;width:48px;height:17px;background:#f4f9ff"></div>
<div class="a" style="left:474px;top:389px;width:48px;height:17px;background:#f4f9ff"></div>
<div class="a" style="left:525px;top:389px;width:49px;height:17px;background:#f4f9ff"></div>
<div class="a" style="left:577px;top:389px;width:64px;height:17px;background:#f4f9ff"></div>
<div class="a" style="left:644px;top:389px;width:42px;height:17px;background:#f4f9ff"></div>
<div class="a" style="left:689px;top:389px;width:48px;height:17px;background:#f4f9ff"></div>
<div class="a" style="left:740px;top:389px;width:66px;height:17px;background:#f4f9ff"></div>
<div class="a" style="left:809px;top:389px;width:21px;height:17px;background:#f4f9ff"></div>
<div class="a" style="left:833px;top:389px;width:65px;height:17px;background:#f4f9ff"></div>
<div class="a" style="left:7px;top:406px;width:892px;height:1px;background:#9fbde8"></div>
<div class="a" style="left:7px;top:424px;width:892px;height:1px;background:#9fbde8"></div>
<div class="a" style="left:27px;top:425px;width:-3px;height:17px;background:#f4f9ff"></div>
<div class="a" style="left:27px;top:425px;width:89px;height:17px;background:#f4f9ff"></div>
<div class="a" style="left:119px;top:425px;width:130px;height:17px;background:#f4f9ff"></div>
<div class="a" style="left:252px;top:425px;width:23px;height:17px;background:#f4f9ff"></div>
<div class="a" style="left:278px;top:425px;width:56px;height:17px;background:#f4f9ff"></div>
<div class="a" style="left:337px;top:425px;width:40px;height:17px;background:#f4f9ff"></div>
<div class="a" style="left:380px;top:425px;width:40px;height:17px;background:#f4f9ff"></div>
<div class="a" style="left:423px;top:425px;width:48px;height:17px;background:#f4f9ff"></div>
<div class="a" style="left:474px;top:425px;width:48px;height:17px;background:#f4f9ff"></div>
<div class="a" style="left:525px;top:425px;width:49px;height:17px;background:#f4f9ff"></div>
<div class="a" style="left:577px;top:425px;width:64px;height:17px;background:#f4f9ff"></div>
<div class="a" style="left:644px;top:425px;width:42px;height:17px;background:#f4f9ff"></div>
<div class="a" style="left:689px;top:425px;width:48px;height:17px;background:#f4f9ff"></div>
<div class="a" style="left:740px;top:425px;width:66px;height:17px;background:#f4f9ff"></div>
<div class="a" style="left:809px;top:425px;width:21px;height:17px;background:#f4f9ff"></div>
<div class="a" style="left:833px;top:425px;width:65px;height:17px;background:#f4f9ff"></div>
<div class="a" style="left:7px;top:442px;width:892px;height:1px;background:#9fbde8"></div>
<div class="a" style="left:7px;top:460px;width:892px;height:1px;background:#9fbde8"></div>
<div class="a" style="left:27px;top:461px;width:-3px;height:17px;background:#f4f9ff"></div>
<div class="a" style="left:27px;top:461px;width:89px;height:17px;background:#f4f9ff"></div>
<div class="a" style="left:119px;top:461px;width:130px;height:17px;background:#f4f9ff"></div>
<div class="a" style="left:252px;top:461px;width:23px;height:17px;background:#f4f9ff"></div>
<div class="a" style="left:278px;top:461px;width:56px;height:17px;background:#f4f9ff"></div>
<div class="a" style="left:337px;top:461px;width:40px;height:17px;background:#f4f9ff"></div>
<div class="a" style="left:380px;top:461px;width:40px;height:17px;background:#f4f9ff"></div>
<div class="a" style="left:423px;top:461px;width:48px;height:17px;background:#f4f9ff"></div>
<div class="a" style="left:474px;top:461px;width:48px;height:17px;background:#f4f9ff"></div>
<div class="a" style="left:525px;top:461px;width:49px;height:17px;background:#f4f9ff"></div>
<div class="a" style="left:577px;top:461px;width:64px;height:17px;background:#f4f9ff"></div>
<div class="a" style="left:644px;top:461px;width:42px;height:17px;background:#f4f9ff"></div>
<div class="a" style="left:689px;top:461px;width:48px;height:17px;background:#f4f9ff"></div>
<div class="a" style="left:740px;top:461px;width:66px;height:17px;background:#f4f9ff"></div>
<div class="a" style="left:809px;top:461px;width:21px;height:17px;background:#f4f9ff"></div>
<div class="a" style="left:833px;top:461px;width:65px;height:17px;background:#f4f9ff"></div>
<div class="a" style="left:7px;top:478px;width:892px;height:1px;background:#9fbde8"></div>
<div class="a" style="left:7px;top:483px;width:1170px;height:20px;background:#adc8ee"></div>
<div class="a" style="left:25px;top:244px;width:1px;height:18px;background:#90b4e6"></div>
<div class="a" style="left:25px;top:262px;width:1px;height:217px;background:#9fbde8"></div>
<div class="a" style="left:117px;top:244px;width:1px;height:18px;background:#90b4e6"></div>
<div class="a" style="left:117px;top:262px;width:1px;height:217px;background:#9fbde8"></div>
<div class="a" style="left:250px;top:244px;width:1px;height:18px;background:#90b4e6"></div>
<div class="a" style="left:250px;top:262px;width:1px;height:217px;background:#9fbde8"></div>
<div class="a" style="left:276px;top:244px;width:1px;height:18px;background:#90b4e6"></div>
<div class="a" style="left:276px;top:262px;width:1px;height:217px;background:#9fbde8"></div>
<div class="a" style="left:335px;top:244px;width:1px;height:18px;background:#90b4e6"></div>
<div class="a" style="left:335px;top:262px;width:1px;height:217px;background:#9fbde8"></div>
<div class="a" style="left:378px;top:244px;width:1px;height:18px;background:#90b4e6"></div>
<div class="a" style="left:378px;top:262px;width:1px;height:217px;background:#9fbde8"></div>
<div class="a" style="left:421px;top:244px;width:1px;height:18px;background:#90b4e6"></div>
<div class="a" style="left:421px;top:262px;width:1px;height:217px;background:#9fbde8"></div>
<div class="a" style="left:472px;top:244px;width:1px;height:18px;background:#90b4e6"></div>
<div class="a" style="left:472px;top:262px;width:1px;height:217px;background:#9fbde8"></div>
<div class="a" style="left:523px;top:244px;width:1px;height:18px;background:#90b4e6"></div>
<div class="a" style="left:523px;top:262px;width:1px;height:217px;background:#9fbde8"></div>
<div class="a" style="left:575px;top:244px;width:1px;height:18px;background:#90b4e6"></div>
<div class="a" style="left:575px;top:262px;width:1px;height:217px;background:#9fbde8"></div>
<div class="a" style="left:642px;top:244px;width:1px;height:18px;background:#90b4e6"></div>
<div class="a" style="left:642px;top:262px;width:1px;height:217px;background:#9fbde8"></div>
<div class="a" style="left:687px;top:244px;width:1px;height:18px;background:#90b4e6"></div>
<div class="a" style="left:687px;top:262px;width:1px;height:217px;background:#9fbde8"></div>
<div class="a" style="left:738px;top:244px;width:1px;height:18px;background:#90b4e6"></div>
<div class="a" style="left:738px;top:262px;width:1px;height:217px;background:#9fbde8"></div>
<div class="a" style="left:807px;top:244px;width:1px;height:18px;background:#90b4e6"></div>
<div class="a" style="left:807px;top:262px;width:1px;height:217px;background:#9fbde8"></div>
<div class="a" style="left:831px;top:244px;width:1px;height:18px;background:#90b4e6"></div>
<div class="a" style="left:831px;top:262px;width:1px;height:217px;background:#9fbde8"></div>
<div class="a" style="left:899px;top:244px;width:1px;height:18px;background:#90b4e6"></div>
<div class="a" style="left:899px;top:262px;width:1px;height:217px;background:#9fbde8"></div>
<div class="a t" style="left:7px;top:249px;width:18px;text-align:center"></div>
<div class="a t" style="left:26px;top:249px;width:91px;text-align:center">产品编号</div>
<div class="a t" style="left:118px;top:249px;width:132px;text-align:center">名称</div>
<div class="a t" style="left:251px;top:249px;width:25px;text-align:center">单位</div>
<div class="a t" style="left:277px;top:249px;width:58px;text-align:center">规格</div>
<div class="a t" style="left:336px;top:249px;width:42px;text-align:center">颜色</div>
<div class="a t" style="left:379px;top:249px;width:42px;text-align:center">品牌</div>
<div class="a t" style="left:422px;top:249px;width:50px;text-align:center">数量</div>
<div class="a t" style="left:473px;top:249px;width:50px;text-align:center">单价</div>
<div class="a t" style="left:524px;top:249px;width:51px;text-align:center">成本价</div>
<div class="a t" style="left:576px;top:249px;width:66px;text-align:center">成本金额</div>
<div class="a t" style="left:643px;top:249px;width:44px;text-align:center">利润</div>
<div class="a t" style="left:688px;top:249px;width:50px;text-align:center">毛利率%</div>
<div class="a t" style="left:739px;top:249px;width:68px;text-align:center">金额</div>
<div class="a t" style="left:808px;top:249px;width:23px;text-align:center">赠品</div>
<div class="a t" style="left:832px;top:249px;width:67px;text-align:center">备注1</div>
<div class="a" style="left:8px;top:267px;width:18px;text-align:center;font-size:9.5px;color:#f0f6ff">1</div>
<div class="a" style="left:412px;top:268px;width:60px;text-align:right;font-size:9px;color:#e4eefb">0</div>
<div class="a" style="left:463px;top:268px;width:60px;text-align:right;font-size:9px;color:#e4eefb">0.00</div>
<div class="a" style="left:515px;top:268px;width:60px;text-align:right;font-size:9px;color:#e4eefb">0.00</div>
<div class="a" style="left:627px;top:268px;width:60px;text-align:right;font-size:9px;color:#e4eefb">0.00</div>
<div class="a" style="left:746px;top:268px;width:60px;text-align:right;font-size:9px;color:#e4eefb">0.00</div>
<div class="a" style="left:8px;top:285px;width:18px;text-align:center;font-size:9.5px;color:#1c1cf0">2</div>
<div class="a" style="left:412px;top:286px;width:60px;text-align:right;font-size:9px;color:#333">0</div>
<div class="a" style="left:463px;top:286px;width:60px;text-align:right;font-size:9px;color:#333">0.00</div>
<div class="a" style="left:515px;top:286px;width:60px;text-align:right;font-size:9px;color:#333">0.00</div>
<div class="a" style="left:627px;top:286px;width:60px;text-align:right;font-size:9px;color:#333">0.00</div>
<div class="a" style="left:746px;top:286px;width:60px;text-align:right;font-size:9px;color:#333">0.00</div>
<div class="a" style="left:8px;top:303px;width:18px;text-align:center;font-size:9.5px;color:#1c1cf0">3</div>
<div class="a" style="left:412px;top:304px;width:60px;text-align:right;font-size:9px;color:#333">0</div>
<div class="a" style="left:463px;top:304px;width:60px;text-align:right;font-size:9px;color:#333">0.00</div>
<div class="a" style="left:515px;top:304px;width:60px;text-align:right;font-size:9px;color:#333">0.00</div>
<div class="a" style="left:627px;top:304px;width:60px;text-align:right;font-size:9px;color:#333">0.00</div>
<div class="a" style="left:746px;top:304px;width:60px;text-align:right;font-size:9px;color:#333">0.00</div>
<div class="a" style="left:8px;top:321px;width:18px;text-align:center;font-size:9.5px;color:#1c1cf0">4</div>
<div class="a" style="left:412px;top:322px;width:60px;text-align:right;font-size:9px;color:#333">0</div>
<div class="a" style="left:463px;top:322px;width:60px;text-align:right;font-size:9px;color:#333">0.00</div>
<div class="a" style="left:515px;top:322px;width:60px;text-align:right;font-size:9px;color:#333">0.00</div>
<div class="a" style="left:627px;top:322px;width:60px;text-align:right;font-size:9px;color:#333">0.00</div>
<div class="a" style="left:746px;top:322px;width:60px;text-align:right;font-size:9px;color:#333">0.00</div>
<div class="a" style="left:8px;top:339px;width:18px;text-align:center;font-size:9.5px;color:#1c1cf0">5</div>
<div class="a" style="left:412px;top:340px;width:60px;text-align:right;font-size:9px;color:#333">0</div>
<div class="a" style="left:463px;top:340px;width:60px;text-align:right;font-size:9px;color:#333">0.00</div>
<div class="a" style="left:515px;top:340px;width:60px;text-align:right;font-size:9px;color:#333">0.00</div>
<div class="a" style="left:627px;top:340px;width:60px;text-align:right;font-size:9px;color:#333">0.00</div>
<div class="a" style="left:746px;top:340px;width:60px;text-align:right;font-size:9px;color:#333">0.00</div>
<div class="a" style="left:8px;top:357px;width:18px;text-align:center;font-size:9.5px;color:#1c1cf0">6</div>
<div class="a" style="left:412px;top:358px;width:60px;text-align:right;font-size:9px;color:#333">0</div>
<div class="a" style="left:463px;top:358px;width:60px;text-align:right;font-size:9px;color:#333">0.00</div>
<div class="a" style="left:515px;top:358px;width:60px;text-align:right;font-size:9px;color:#333">0.00</div>
<div class="a" style="left:627px;top:358px;width:60px;text-align:right;font-size:9px;color:#333">0.00</div>
<div class="a" style="left:746px;top:358px;width:60px;text-align:right;font-size:9px;color:#333">0.00</div>
<div class="a" style="left:8px;top:375px;width:18px;text-align:center;font-size:9.5px;color:#1c1cf0">7</div>
<div class="a" style="left:412px;top:376px;width:60px;text-align:right;font-size:9px;color:#333">0</div>
<div class="a" style="left:463px;top:376px;width:60px;text-align:right;font-size:9px;color:#333">0.00</div>
<div class="a" style="left:515px;top:376px;width:60px;text-align:right;font-size:9px;color:#333">0.00</div>
<div class="a" style="left:627px;top:376px;width:60px;text-align:right;font-size:9px;color:#333">0.00</div>
<div class="a" style="left:746px;top:376px;width:60px;text-align:right;font-size:9px;color:#333">0.00</div>
<div class="a" style="left:8px;top:393px;width:18px;text-align:center;font-size:9.5px;color:#1c1cf0">8</div>
<div class="a" style="left:412px;top:394px;width:60px;text-align:right;font-size:9px;color:#333">0</div>
<div class="a" style="left:463px;top:394px;width:60px;text-align:right;font-size:9px;color:#333">0.00</div>
<div class="a" style="left:515px;top:394px;width:60px;text-align:right;font-size:9px;color:#333">0.00</div>
<div class="a" style="left:627px;top:394px;width:60px;text-align:right;font-size:9px;color:#333">0.00</div>
<div class="a" style="left:746px;top:394px;width:60px;text-align:right;font-size:9px;color:#333">0.00</div>
<div class="a" style="left:8px;top:411px;width:18px;text-align:center;font-size:9.5px;color:#1c1cf0">9</div>
<div class="a" style="left:412px;top:412px;width:60px;text-align:right;font-size:9px;color:#333">0</div>
<div class="a" style="left:463px;top:412px;width:60px;text-align:right;font-size:9px;color:#333">0.00</div>
<div class="a" style="left:515px;top:412px;width:60px;text-align:right;font-size:9px;color:#333">0.00</div>
<div class="a" style="left:627px;top:412px;width:60px;text-align:right;font-size:9px;color:#333">0.00</div>
<div class="a" style="left:746px;top:412px;width:60px;text-align:right;font-size:9px;color:#333">0.00</div>
<div class="a" style="left:8px;top:429px;width:18px;text-align:center;font-size:9.5px;color:#1c1cf0">10</div>
<div class="a" style="left:412px;top:430px;width:60px;text-align:right;font-size:9px;color:#333">0</div>
<div class="a" style="left:463px;top:430px;width:60px;text-align:right;font-size:9px;color:#333">0.00</div>
<div class="a" style="left:515px;top:430px;width:60px;text-align:right;font-size:9px;color:#333">0.00</div>
<div class="a" style="left:627px;top:430px;width:60px;text-align:right;font-size:9px;color:#333">0.00</div>
<div class="a" style="left:746px;top:430px;width:60px;text-align:right;font-size:9px;color:#333">0.00</div>
<div class="a" style="left:8px;top:447px;width:18px;text-align:center;font-size:9.5px;color:#1c1cf0">11</div>
<div class="a" style="left:412px;top:448px;width:60px;text-align:right;font-size:9px;color:#333">0</div>
<div class="a" style="left:463px;top:448px;width:60px;text-align:right;font-size:9px;color:#333">0.00</div>
<div class="a" style="left:515px;top:448px;width:60px;text-align:right;font-size:9px;color:#333">0.00</div>
<div class="a" style="left:627px;top:448px;width:60px;text-align:right;font-size:9px;color:#333">0.00</div>
<div class="a" style="left:746px;top:448px;width:60px;text-align:right;font-size:9px;color:#333">0.00</div>
<div class="a" style="left:8px;top:465px;width:18px;text-align:center;font-size:9.5px;color:#1c1cf0">12</div>
<div class="a" style="left:412px;top:466px;width:60px;text-align:right;font-size:9px;color:#333">0</div>
<div class="a" style="left:463px;top:466px;width:60px;text-align:right;font-size:9px;color:#333">0.00</div>
<div class="a" style="left:515px;top:466px;width:60px;text-align:right;font-size:9px;color:#333">0.00</div>
<div class="a" style="left:627px;top:466px;width:60px;text-align:right;font-size:9px;color:#333">0.00</div>
<div class="a" style="left:746px;top:466px;width:60px;text-align:right;font-size:9px;color:#333">0.00</div>
<div class="a t" style="left:57px;top:489px;font-weight:bold;color:#8b1a1a;-webkit-text-stroke:0">合计<span style="display:inline-block;width:9px;text-indent:-2px">：</span></div>
<div class="a" style="left:412px;top:490px;width:60px;text-align:right;font-size:9px;font-weight:bold;color:#8b1a1a">0</div>
<div class="a" style="left:583px;top:490px;width:60px;text-align:right;font-size:9px;font-weight:bold;color:#8b1a1a">0.00</div>
<div class="a" style="left:628px;top:490px;width:60px;text-align:right;font-size:9px;font-weight:bold;color:#8b1a1a">0.00</div>
<div class="a" style="left:747px;top:490px;width:60px;text-align:right;font-size:9px;font-weight:bold;color:#8b1a1a">0.00</div>
<div class="a" style="left:1177px;top:244px;width:13px;height:259px;background:repeating-conic-gradient(#f4f4f4 0 25%,#fcfcfc 0 50%) 0 0/2px 2px"></div>
<div class="a" style="left:1177px;top:244px;width:13px;height:11px;background:#f0f0f0;border-right:1px solid #666;border-bottom:1px solid #666;border-left:1px solid #fff;border-top:1px solid #fff"></div>
<div class="a" style="left:1180px;top:248px;width:0;height:0;border-left:3.5px solid transparent;border-right:3.5px solid transparent;border-bottom:3.5px solid #000"></div>
<div class="a" style="left:1177px;top:256px;width:13px;height:94px;background:#eeeeee;border-right:1px solid #666;border-bottom:1px solid #666;border-left:1px solid #fff;border-top:1px solid #fff"></div>
<div class="a" style="left:1177px;top:491px;width:13px;height:12px;background:#f0f0f0;border-right:1px solid #666;border-bottom:1px solid #666;border-left:1px solid #fff;border-top:1px solid #fff"></div>
<div class="a" style="left:1180px;top:495px;width:0;height:0;border-left:3.5px solid transparent;border-right:3.5px solid transparent;border-top:3.5px solid #000"></div>
<div class="a" style="left:7px;top:503px;width:1170px;height:13px;background:repeating-conic-gradient(#f4f4f4 0 25%,#fcfcfc 0 50%) 0 0/2px 2px"></div>
<div class="a" style="left:7px;top:503px;width:7px;height:13px;background:#6e6e6e"></div>
<div class="a" style="left:14px;top:503px;width:13px;height:13px;background:#f0f0f0;border-right:1px solid #666;border-bottom:1px solid #666;border-left:1px solid #fff;border-top:1px solid #fff"></div>
<div class="a" style="left:18px;top:506px;width:0;height:0;border-top:3.5px solid transparent;border-bottom:3.5px solid transparent;border-right:3.5px solid #000"></div>
<div class="a" style="left:27px;top:503px;width:623px;height:13px;background:#eeeeee;border-right:1px solid #666;border-bottom:1px solid #666;border-left:1px solid #fff"></div>
<div class="a" style="left:1164px;top:503px;width:13px;height:13px;background:#f0f0f0;border-right:1px solid #666;border-bottom:1px solid #666;border-left:1px solid #fff;border-top:1px solid #fff"></div>
<div class="a" style="left:1169px;top:506px;width:0;height:0;border-top:3.5px solid transparent;border-bottom:3.5px solid transparent;border-left:3.5px solid #000"></div>
<div class="a" style="left:1177px;top:503px;width:13px;height:13px;background:#c8c8c8"></div>
<div class="a" style="left:6px;top:522px;width:1185px;height:91px;background:#fff;border:1px solid #6e6e6e"></div>
<div class="a t" style="left:13px;top:532px;">应收<span style="display:inline-block;width:9px;text-indent:-2px">：</span></div>
<div class="a t" style="left:40px;top:531px;color:#26324e;font-size:9.5px;-webkit-text-stroke:0">0.00</div>
<div class="ul" style="left:40px;top:542px;width:89px;background:#888"></div>
<div class="a t" style="left:145px;top:532px;">运费<span style="display:inline-block;width:9px;text-indent:-2px">：</span></div>
<div class="a t" style="left:170px;top:531px;color:#26324e;font-size:9.5px;-webkit-text-stroke:0">0.00</div>
<div class="ul" style="left:170px;top:542px;width:133px;background:#888"></div>
<div class="a t" style="left:323px;top:532px;">杂费<span style="display:inline-block;width:9px;text-indent:-2px">：</span></div>
<div class="a t" style="left:349px;top:531px;color:#26324e;font-size:9.5px;-webkit-text-stroke:0">0.00</div>
<div class="ul" style="left:349px;top:542px;width:141px;background:#888"></div>
<div class="a t" style="left:515px;top:532px;">制单<span style="display:inline-block;width:9px;text-indent:-2px">：</span></div>
<div class="a t" style="left:539px;top:531px;">管理员</div>
<div class="ul" style="left:539px;top:542px;width:51px;background:#888"></div>
<div class="a t" style="left:13px;top:555px;">优惠<span style="display:inline-block;width:9px;text-indent:-2px">：</span></div>
<div class="a t" style="left:40px;top:554px;color:#26324e;font-size:9.5px;-webkit-text-stroke:0">0.00</div>
<div class="ul" style="left:40px;top:565px;width:89px"></div>
<div class="a t" style="left:145px;top:555px;color:#ff2a2a;-webkit-text-stroke:0.1px">收现<span style="display:inline-block;width:9px;text-indent:-2px">：</span></div>
<div class="a t" style="left:173px;top:554px;color:#ff2a2a;font-size:9.5px;-webkit-text-stroke:0">0.00</div>
<div class="ul" style="left:173px;top:565px;width:93px"></div>
<div class="a t" style="left:292px;top:555px;">快递<span style="display:inline-block;width:9px;text-indent:-2px">：</span></div>
<div class="ul" style="left:319px;top:565px;width:53px"></div>
<div class="btn" style="left:375px;top:553px;width:15px;height:14px"></div>
<div class="a" style="left:379px;top:558px;width:7px;height:5px;background:#3aa0e8"></div>
<div class="a t" style="left:396px;top:555px;">单号<span style="display:inline-block;width:9px;text-indent:-2px">：</span></div>
<div class="ul" style="left:421px;top:565px;width:85px"></div>
<div class="a t" style="left:516px;top:555px;">审核<span style="display:inline-block;width:9px;text-indent:-2px">：</span></div>
<div class="ul" style="left:539px;top:565px;width:52px"></div>
<div class="a t" style="left:13px;top:575px;">备注<span style="display:inline-block;width:9px;text-indent:-2px">：</span></div>
<div class="ul" style="left:40px;top:584px;width:550px;background:#555"></div>
<div class="a t" style="left:13px;top:591px;">送货<span style="display:inline-block;width:9px;text-indent:-2px">：</span></div>
<div class="ul" style="left:40px;top:602px;width:550px;background:#555"></div>
<div class="a" style="left:0px;top:619px;width:1200px;height:1px;background:#d0dcf0"></div>
<div class="a" style="left:0px;top:620px;width:1200px;height:1px;background:#8ea4c8"></div>
<div class="a" style="left:0px;top:621px;width:1200px;height:1px;background:#b0b4bc"></div>
<div class="a" style="left:0px;top:622px;width:1200px;height:1px;background:#6c7c92"></div>
<div class="a" style="left:0px;top:623px;width:1200px;height:11px;background:#7ba3de"></div>
<div class="a" style="left:1px;top:623px;width:1px;height:11px;background:#a8c2e8"></div>
<div class="a" style="left:82px;top:624px;width:1px;height:10px;background:#c8daf2"></div>
<div class="a" style="left:83px;top:624px;width:1px;height:10px;background:#5a729c"></div>
<div class="a" style="left:269px;top:624px;width:1px;height:10px;background:#c8daf2"></div>
<div class="a" style="left:271px;top:624px;width:1px;height:10px;background:#5a729c"></div>
<div class="a" style="left:549px;top:624px;width:1px;height:10px;background:#c8daf2"></div>
<div class="a" style="left:551px;top:624px;width:1px;height:10px;background:#5a729c"></div>
<div class="a" style="left:731px;top:624px;width:1px;height:10px;background:#c8daf2"></div>
<div class="a" style="left:733px;top:624px;width:1px;height:10px;background:#5a729c"></div>
<svg class="a" style="left:4px;top:624px" width="13" height="10"><circle cx="3.5" cy="2.5" r="2" fill="#40a0e8"/><path d="M0 10Q0 5 3.5 5Q6 5 6.5 7V10z" fill="#2a80d0"/><circle cx="8.5" cy="3" r="2.2" fill="#70d040"/><path d="M4.5 10Q4.5 5.5 8.5 5.5Q12.5 5.5 12.5 10z" fill="#40b020"/></svg>
<div class="a t" style="left:18px;top:626px;">管理员</div>
<svg class="a" style="left:86px;top:624px" width="19" height="10"><path d="M1 4Q3 0 9.5 0Q16 0 18 4L17 10H2z" fill="#f0c030"/><path d="M3 3l2 -2M16 3l-2-2" stroke="#f8e070" stroke-width="1"/><ellipse cx="9.5" cy="6" rx="5" ry="4.5" fill="#e01010"/><text x="5.3" y="8" font-size="5" fill="#f8c040" font-family="Liberation Sans" font-weight="bold">VIP</text></svg>
<svg class="a" style="left:273px;top:623px" width="15" height="11"><rect x="9" y="4.5" width="5" height="6.5" fill="#f0a030"/><ellipse cx="7" cy="7.5" rx="4.5" ry="4.5" fill="#f8e070"/><path d="M2 7Q1.5 1 7 1Q12 1 11.5 4.5Q9 3 6 5Q4 6 2.5 8z" fill="#8a4018"/><circle cx="6" cy="7" r="0.6" fill="#3050c0"/><circle cx="9" cy="7" r="0.6" fill="#3050c0"/><ellipse cx="7.5" cy="10" rx="1.2" ry="0.6" fill="#f06070"/></svg>
<svg class="a" style="left:553px;top:624px" width="11" height="10"><circle cx="5.5" cy="5.5" r="5" fill="#4a90d8" stroke="#c8d0d8" stroke-width="0.8"/><path d="M1 3.5Q5.5 1 10 3.5" fill="#e8eef4"/><path d="M5 8l1.5-4" stroke="#d04040" stroke-width="1"/><path d="M2 9Q5.5 11 9 9" fill="#a8e0f4"/></svg>
<div class="a t" style="left:568px;top:626px;">2026年1月30日&nbsp;&nbsp;&nbsp;星期五&nbsp;&nbsp;&nbsp;&nbsp;&nbsp;10:24:27</div>
<svg class="a" style="left:735px;top:625px" width="12" height="9"><rect x="1.5" y="4" width="9" height="5" fill="#f4e4c0"/><path d="M0 5L4 0.5H9L12 4.5 10.5 5.5 6 2 1 6z" fill="#d85010"/><rect x="6" y="5.5" width="2.5" height="3.5" rx="1" fill="#8a4a20"/></svg>
<div class="a t" style="left:750px;top:626px;color:#1a2ae8">版本号<span style="display:inline-block;width:9px;text-indent:-2px">：</span>9.8 单机版</div>
</body></html>
